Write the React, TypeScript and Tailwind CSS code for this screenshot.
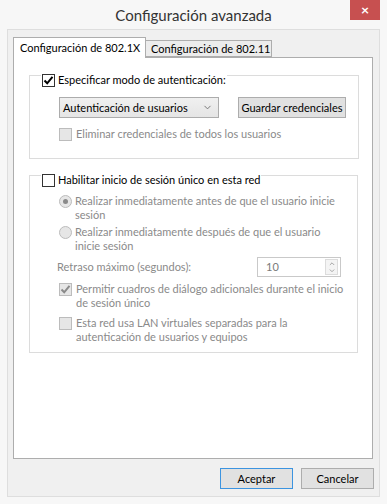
import { ChevronDown, ChevronUp } from 'lucide-react'

function CheckBox({ checked = false, disabled = false }: { checked?: boolean; disabled?: boolean }) {
  return (
    <span
      className={`flex h-[13px] w-[13px] shrink-0 items-center justify-center border ${
        disabled ? 'border-[#bcbcbc] bg-[#e6e6e6]' : 'border-[#333] bg-white'
      }`}
    >
      {checked && (
        <svg width="11" height="11" viewBox="0 0 11 11">
          <path
            d="M1.5 5.5 L4.2 8.3 L9.5 1.8"
            fill="none"
            stroke={disabled ? '#8a8a8a' : '#000'}
            strokeWidth="2"
          />
        </svg>
      )}
    </span>
  )
}

function Radio({ checked = false }: { checked?: boolean }) {
  return (
    <span className="flex h-[13px] w-[13px] shrink-0 items-center justify-center rounded-full border border-[#bcbcbc] bg-[#e6e6e6]">
      {checked && <span className="h-[5px] w-[5px] rounded-full bg-[#8a8a8a]" />}
    </span>
  )
}

export default function App() {
  return (
    <div className="h-[504px] w-[387px] whitespace-nowrap bg-[#f7f7f7] font-['Segoe_UI','Lato',sans-serif] text-[11px] leading-[14px] text-black">
      {/* Title bar */}
      <div className="relative flex h-[29px] items-center justify-center">
        <span className="pt-[1px] text-[15px] text-[#333]">Configuración avanzada</span>
        <button className="absolute right-[7px] top-0 flex h-[20px] w-[30px] items-center justify-center bg-[#c75050] text-[14px] font-bold text-white">
          ×
        </button>
      </div>

      {/* Client area */}
      <div className="mx-[7px] flex h-[468px] flex-col border border-[#dedede] bg-[#f0f0f0] px-[5px] pt-[7px]">
        {/* Tabs */}
        <div className="flex h-[20px] items-end">
          <div className="relative z-10 -mb-[1px] flex h-[21px] w-[133px] items-center border border-b-0 border-[#adadad] bg-white pl-[6px]">
            Configuración de 802.1X
          </div>
          <div className="flex h-[17px] w-[126px] items-center border border-l-0 border-[#adadad] bg-[#ececec] pl-[5px]">
            Configuración de 802.11
          </div>
        </div>

        {/* Panel */}
        <div className="h-[402px] w-[360px] border border-[#adadad] bg-white pl-[15px] pt-[17px]">
          {/* Group 1 */}
          <div className="h-[84px] w-[330px] border border-[#dcdcdc]">
            <div className="-mt-[3px] ml-[11px] flex w-fit items-center gap-[3px] bg-white px-[1px]">
              <CheckBox checked />
              <span>Especificar modo de autenticación:</span>
            </div>
            <div className="ml-[29px] mt-[10px] flex items-center gap-[19px]">
              <div className="flex h-[21px] w-[160px] items-center justify-between border border-[#acacac] bg-gradient-to-b from-[#f0f0f0] to-[#e5e5e5] pl-[3px] pr-[5px]">
                <span>Autenticación de usuarios</span>
                <ChevronDown size={11} strokeWidth={2} className="text-[#707070]" />
              </div>
              <button className="flex h-[21px] w-[108px] items-center justify-center border border-[#adadad] bg-[#e1e1e1]">
                Guardar credenciales
              </button>
            </div>
            <div className="ml-[29px] mt-[9px] flex items-center gap-[4px] text-[#8a8a8a]">
              <CheckBox disabled />
              <span>Eliminar credenciales de todos los usuarios</span>
            </div>
          </div>

          {/* Group 2 */}
          <div className="mt-[16px] h-[178px] w-[329px] border border-[#dcdcdc]">
            <div className="-mt-[3px] ml-[11px] flex w-fit items-center gap-[3px] bg-white px-[1px]">
              <CheckBox />
              <span>Habilitar inicio de sesión único en esta red</span>
            </div>
            <div className="ml-[29px] mt-[7px] flex flex-col text-[#8a8a8a]">
              <div className="flex items-start gap-[3px]">
                <span className="mt-[1px]">
                  <Radio checked />
                </span>
                <span>
                  Realizar inmediatamente antes de que el usuario inicie
                  <br />
                  sesión
                </span>
              </div>
              <div className="mt-[3px] flex items-start gap-[3px]">
                <span className="mt-[1px]">
                  <Radio />
                </span>
                <span>
                  Realizar inmediatamente después de que el usuario
                  <br />
                  inicie sesión
                </span>
              </div>
              <div className="mt-[4px] flex items-center">
                <span className="-ml-[2px] w-[200px]">Retraso máximo (segundos):</span>
                <div className="flex h-[20px] w-[84px] items-center justify-between border border-[#c9c9c9] bg-white pl-[8px] pr-[2px]">
                  <span className="text-[#7a7a7a]">10</span>
                  <div className="flex h-[16px] w-[13px] flex-col items-center justify-center border border-[#dcdcdc] bg-[#f4f4f4]">
                    <ChevronUp size={8} strokeWidth={3} className="-mb-[1px] text-[#a0a0a0]" />
                    <ChevronDown size={8} strokeWidth={3} className="text-[#a0a0a0]" />
                  </div>
                </div>
              </div>
              <div className="mt-[5px] flex items-start gap-[4px]">
                <span className="mt-[1px]">
                  <CheckBox checked disabled />
                </span>
                <span>
                  Permitir cuadros de diálogo adicionales durante el inicio
                  <br />
                  de sesión único
                </span>
              </div>
              <div className="mt-[6px] flex items-start gap-[4px]">
                <span className="mt-[1px]">
                  <CheckBox disabled />
                </span>
                <span>
                  Esta red usa LAN virtuales separadas para la
                  <br />
                  autenticación de usuarios y equipos
                </span>
              </div>
            </div>
          </div>
        </div>

        {/* Buttons */}
        <div className="mt-[9px] flex justify-end gap-[8px]">
          <button className="h-[21px] w-[73px] border border-[#3c94e0] bg-[#e1e1e1]">Aceptar</button>
          <button className="h-[21px] w-[73px] border border-[#adadad] bg-[#e1e1e1]">Cancelar</button>
        </div>
      </div>
    </div>
  )
}
